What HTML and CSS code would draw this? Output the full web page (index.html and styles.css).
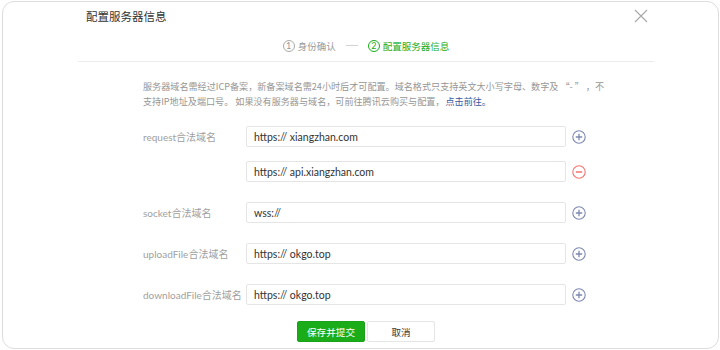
FILE: index.html
```html
<!DOCTYPE html>
<html lang="zh-CN">
<head>
  <meta charset="UTF-8">
  <meta name="viewport" content="width=device-width, initial-scale=1.0">
  <title>配置服务器信息</title>
  <link rel="stylesheet" href="styles.css">
</head>
<body>
  <div class="dialog">
    <!-- Header -->
    <div class="dialog-head">
      <h3 class="dialog-title">配置服务器信息</h3>
      <svg class="close" width="14" height="14" viewBox="0 0 14 14">
        <path d="M1 1 L13 13 M13 1 L1 13" stroke="#a8a8a8" stroke-width="1.1" fill="none"/>
      </svg>
    </div>

    <!-- Steps -->
    <div class="steps">
      <div class="step">
        <span class="step-num">1</span>
        <span>身份确认</span>
      </div>
      <div class="step-line"></div>
      <div class="step current">
        <span class="step-num">2</span>
        <span>配置服务器信息</span>
      </div>
    </div>

    <!-- Form -->
    <div class="form">
      <p class="tips">服务器域名需经过ICP备案，新备案域名需24小时后才可配置。域名格式只支持英文大小写字母、数字及 “- ” ，不支持IP地址及端口号。 如果没有服务器与域名，可前往腾讯云购买与配置，<a class="link" href="#">点击前往。</a></p>

      <div class="row">
        <label class="row-label">request合法域名</label>
        <input class="row-input" type="text" value="https:// xiangzhan.com">
        <span class="btn-icon add">
          <svg width="14" height="14" viewBox="0 0 14 14"><circle cx="7" cy="7" r="6.2" fill="none" stroke="#7d88b0" stroke-width="1.1"/><path d="M7 3.8 V10.2 M3.8 7 H10.2" stroke="#7d88b0" stroke-width="1.3"/></svg>
        </span>
      </div>
      <div class="row sub">
        <label class="row-label"></label>
        <input class="row-input" type="text" value="https:// api.xiangzhan.com">
        <span class="btn-icon remove">
          <svg width="14" height="14" viewBox="0 0 14 14"><circle cx="7" cy="7" r="6.2" fill="none" stroke="#f47272" stroke-width="1.1"/><path d="M3.8 7 H10.2" stroke="#f47272" stroke-width="1.3"/></svg>
        </span>
      </div>
      <div class="row">
        <label class="row-label">socket合法域名</label>
        <input class="row-input" type="text" value="wss://">
        <span class="btn-icon add">
          <svg width="14" height="14" viewBox="0 0 14 14"><circle cx="7" cy="7" r="6.2" fill="none" stroke="#7d88b0" stroke-width="1.1"/><path d="M7 3.8 V10.2 M3.8 7 H10.2" stroke="#7d88b0" stroke-width="1.3"/></svg>
        </span>
      </div>
      <div class="row">
        <label class="row-label">uploadFile合法域名</label>
        <input class="row-input" type="text" value="https:// okgo.top">
        <span class="btn-icon add">
          <svg width="14" height="14" viewBox="0 0 14 14"><circle cx="7" cy="7" r="6.2" fill="none" stroke="#7d88b0" stroke-width="1.1"/><path d="M7 3.8 V10.2 M3.8 7 H10.2" stroke="#7d88b0" stroke-width="1.3"/></svg>
        </span>
      </div>
      <div class="row">
        <label class="row-label">downloadFile合法域名</label>
        <input class="row-input" type="text" value="https:// okgo.top">
        <span class="btn-icon add">
          <svg width="14" height="14" viewBox="0 0 14 14"><circle cx="7" cy="7" r="6.2" fill="none" stroke="#7d88b0" stroke-width="1.1"/><path d="M7 3.8 V10.2 M3.8 7 H10.2" stroke="#7d88b0" stroke-width="1.3"/></svg>
        </span>
      </div>
    </div>

    <!-- Footer buttons -->
    <div class="dialog-foot">
      <button class="btn btn-primary">保存并提交</button>
      <button class="btn btn-default">取消</button>
    </div>
  </div>
</body>
</html>
```

FILE: styles.css
```css
/* General page */
body {
  margin: 0;
  padding: 0;
  background: white;
  font-family: "Lato", "Noto Sans CJK SC", sans-serif;
  color: rgb(51, 51, 51);
}

.dialog {
  box-sizing: border-box;
  width: 717px;
  height: 348px;
  margin: 1px 1px 0 2px;
  border: 1px solid rgb(221, 221, 221);
  border-radius: 12px;
  background: white;
  overflow: hidden;
}

/* Header */
.dialog-head {
  display: flex;
  align-items: center;
  justify-content: space-between;
  height: 28px;
  padding: 0 70px 0 83px;
}

.dialog-title {
  margin: 0;
  font-size: 11.5px;
  font-weight: normal;
  color: rgb(51, 51, 51);
}

.close {
  display: block;
}

/* Steps */
.steps {
  display: flex;
  align-items: center;
  justify-content: center;
  height: 31px;
  margin: 0 64px 0 75px;
  border-bottom: 1px solid rgb(236, 236, 236);
  font-size: 9.5px;
  color: rgb(153, 153, 153);
}

.step {
  display: flex;
  align-items: center;
  gap: 3px;
}

.step-num {
  box-sizing: border-box;
  width: 12px;
  height: 12px;
  border: 1px solid rgb(170, 170, 170);
  border-radius: 50%;
  font-size: 9px;
  line-height: 10px;
  text-align: center;
}

.step-line {
  width: 12px;
  height: 1px;
  margin: 0 10px;
  background: rgb(210, 210, 210);
}

.step.current {
  color: rgb(26, 173, 25);
}

.step.current .step-num {
  border-color: rgb(26, 173, 25);
}

/* Form */
.form {
  padding-left: 140px;
}

.tips {
  width: 467px;
  margin: 17px 0 17px;
  font-family: "Noto Sans CJK SC", sans-serif;
  font-size: 9.1px;
  line-height: 15px;
  color: rgb(150, 150, 150);
}

.link {
  margin-left: 1px;
  color: rgb(52, 88, 160);
  text-decoration: none;
}

.row {
  display: flex;
  align-items: center;
  margin-bottom: 20px;
}

.row.sub {
  margin-top: -6px;
}

.row-label {
  width: 103px;
  font-size: 10px;
  color: rgb(160, 160, 160);
}

.row-input {
  box-sizing: border-box;
  width: 320px;
  height: 21px;
  padding: 0 7px;
  border: 1px solid rgb(229, 229, 229);
  border-radius: 2px;
  font-family: "Lato", "Noto Sans CJK SC", sans-serif;
  font-size: 10.5px;
  color: rgb(51, 51, 51);
  outline: none;
}

.btn-icon {
  display: flex;
  margin-left: 6px;
}

/* Footer */
.dialog-foot {
  display: flex;
  justify-content: center;
  gap: 2px;
  margin: -4px 64px 0 75px;
}

.btn {
  box-sizing: border-box;
  width: 68px;
  height: 21px;
  border-radius: 2px;
  font-family: "Noto Sans CJK SC", sans-serif;
  font-size: 9.6px;
  cursor: pointer;
}

.btn-primary {
  background-color: rgb(26, 173, 25);
  border: 1px solid rgb(26, 163, 25);
  color: white;
}

.btn-default {
  background-color: white;
  border: 1px solid rgb(229, 229, 229);
  color: rgb(51, 51, 51);
}
```
